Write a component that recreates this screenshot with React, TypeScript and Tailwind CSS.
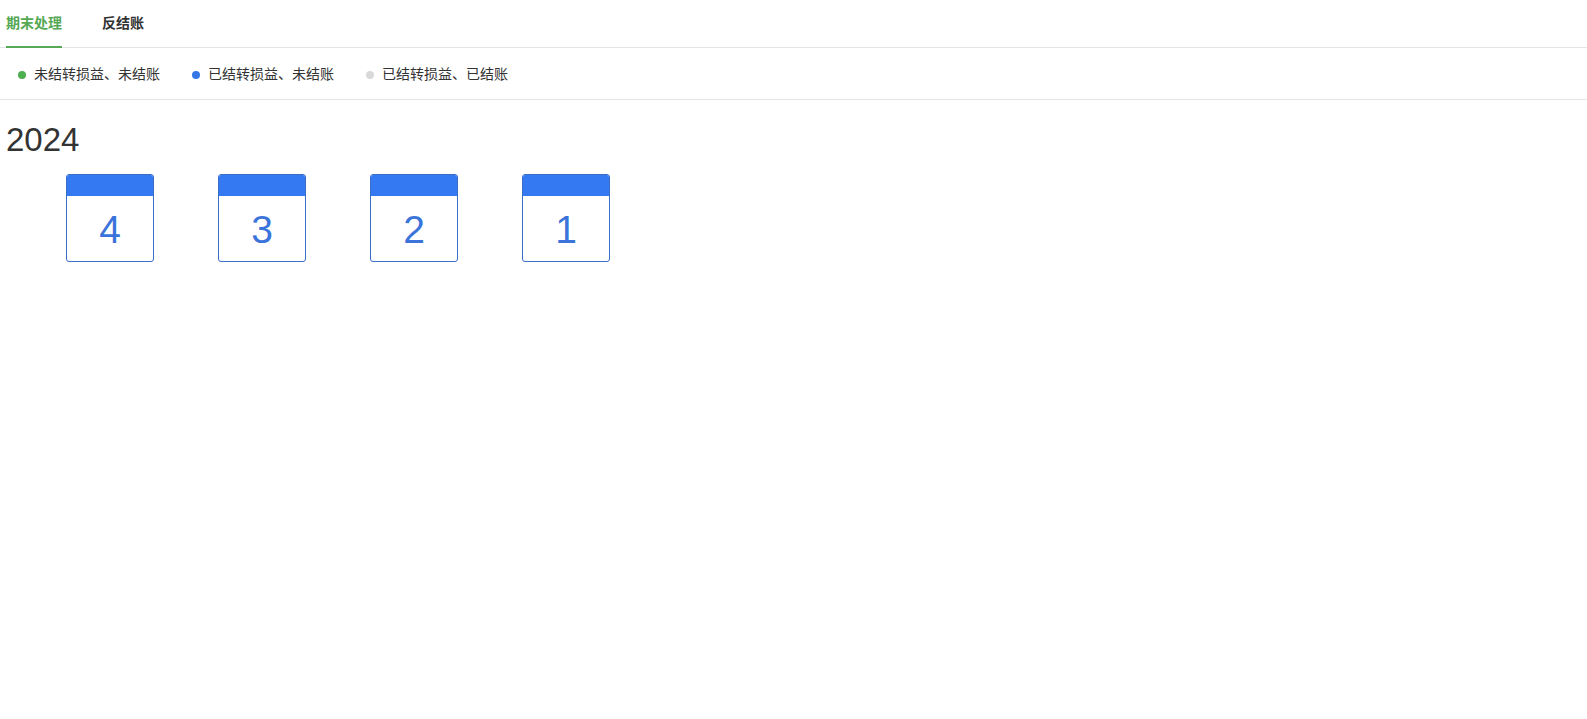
import { useState } from "react";

const legend = [
  { label: "未结转损益、未结账", dot: "bg-[#4caf50]" },
  { label: "已结转损益、未结账", dot: "bg-[#3578e5]" },
  { label: "已结转损益、已结账", dot: "bg-[#d9d9d9]" },
];

const months = [4, 3, 2, 1];

export default function App() {
  const [tab, setTab] = useState(0);
  const tabs = ["期末处理", "反结账"];

  return (
    <div className="min-h-screen bg-white text-[#333] font-['Liberation_Sans','Noto_Sans_CJK_SC',sans-serif]">
      {/* tabs */}
      <div className="flex h-[48px] gap-[40px] border-b border-[#e4e4e4] pl-[6px]">
        {tabs.map((t, i) => (
          <button
            key={t}
            onClick={() => setTab(i)}
            className={`relative h-full text-[14px] font-bold ${
              tab === i ? "text-[#55a854]" : "text-[#333]"
            }`}
          >
            {t}
            {tab === i && (
              <span className="absolute bottom-[-1px] left-0 right-0 h-[2px] bg-[#55a854]" />
            )}
          </button>
        ))}
      </div>

      {/* legend */}
      <div className="flex h-[52px] items-center gap-[32px] border-b border-[#e4e4e4] pl-[18px] pt-[2px]">
        {legend.map((l) => (
          <div key={l.label} className="flex items-center gap-[8px] text-[14px] text-[#333]">
            <span className={`h-[8px] w-[8px] rounded-full ${l.dot}`} />
            <span>{l.label}</span>
          </div>
        ))}
      </div>

      {/* year */}
      <div className="px-[6px] pt-[20px]">
        <div className="text-[33px] leading-[40px] text-[#333]">2024</div>
        <div className="mt-[14px] flex gap-[64px] pl-[60px]">
          {months.map((m) => (
            <div
              key={m}
              className="flex h-[88px] w-[88px] flex-col overflow-hidden rounded-[3px] border border-[#3a6fc6] bg-white"
            >
              <div className="h-[21px] bg-[#3579f2]" />
              <div className="flex flex-1 items-center justify-center pt-[2px] text-[39px] leading-none text-[#3a74da]">
                {m}
              </div>
            </div>
          ))}
        </div>
      </div>
    </div>
  );
}
